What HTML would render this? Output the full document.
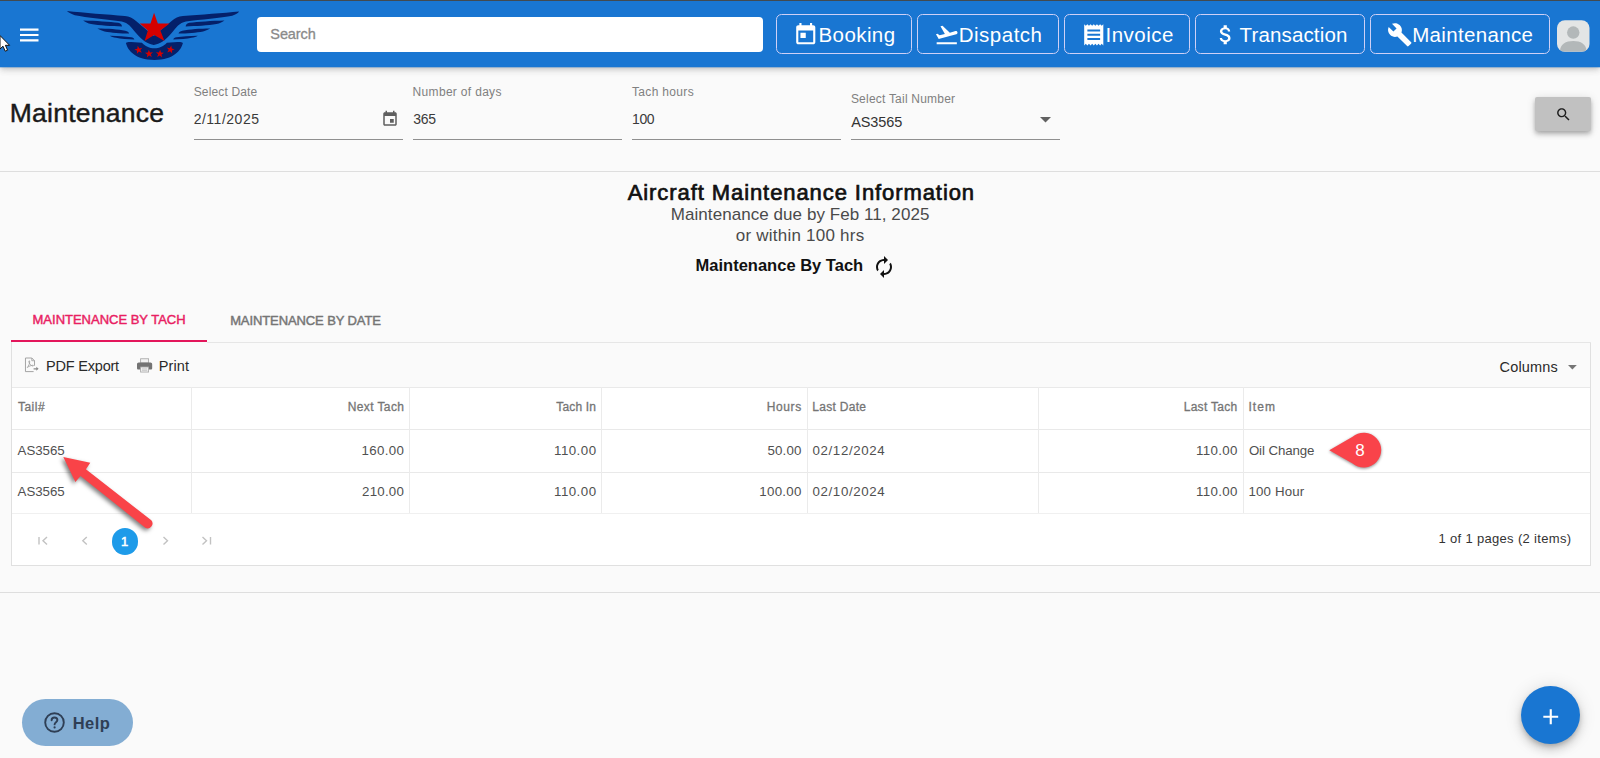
<!DOCTYPE html>
<html lang="en">
<head>
<meta charset="utf-8">
<title>Maintenance</title>
<style>
*{box-sizing:border-box;margin:0;padding:0}
html,body{width:1600px;height:758px;overflow:hidden;background:#fafafa;font-family:"Liberation Sans",sans-serif;color:#212121}
.abs,.t{position:absolute}
.t{white-space:nowrap;display:block}
#topline{left:0;top:0;width:1600px;height:1px;background:#424a50}
#hdr{left:0;top:0;width:1600px;height:67px;background:#1976d2;box-shadow:0 2px 4px -1px rgba(0,0,0,.13),0 4px 6px 0 rgba(0,0,0,.09),0 1px 10px 0 rgba(0,0,0,.08)}
#search{left:257px;top:17px;width:506px;height:34.5px;background:#fff;border-radius:4px}
.nb{top:14px;height:40px;border:1px solid #cfd0f6;border-radius:5.500px}
.uline{height:1px;background:#8f8f8f;top:139px}
.hr{left:0;width:1600px;height:1px;background:#dedede}
.vl{top:387px;width:1px;height:126px;background:#ebebeb}
.hl{left:12px;width:1578px;height:1px;background:#e9e9e9}
svg{position:absolute;overflow:visible}
</style>
</head>
<body>
<div class="abs" id="hdr"></div>
<div class="abs" id="topline"></div>
<div class="abs" style="left:0;top:67px;width:1600px;height:1px;background:rgba(25,118,210,.3)"></div>

<!-- hamburger -->
<svg style="left:17px;top:23px" width="24" height="24" viewBox="0 0 24 24"><path fill="#fff" d="M3 18.4h18.5v-2.2H3v2.2zm0-5.3h18.5v-2.2H3v2.2zM3 5.6v2.2h18.5V5.6H3z"/></svg>
<!-- mouse cursor -->
<svg style="left:0;top:35px" width="12" height="18" viewBox="0 0 12 18"><path d="M0 0.5 L0 14 L3 11.2 L5.2 16.2 L7.6 15.2 L5.4 10.3 L9.6 10.3 Z" fill="#fff" stroke="#111" stroke-width="1"/></svg>

<!-- logo -->
<svg id="logo" style="left:60px;top:5px" width="190" height="60" viewBox="0 0 1600 505">
<g id="wingL" fill="#04206a">
<path d="M58 51 C200 66 400 82 545 92 C585 96 610 108 640 135 L793 262 L793 336 C740 330 690 295 640 235 C600 185 575 150 520 138 C400 120 220 106 125 86 C95 78 75 65 58 51Z"/>
<path d="M195 130 C300 133 420 140 490 150 C510 154 520 165 522 180 C440 178 330 172 262 160 C235 154 210 142 195 130Z"/>
<path d="M315 198 C400 198 490 206 550 216 C568 220 578 228 582 240 C510 240 430 232 375 222 C350 216 330 208 315 198Z"/>
<path d="M420 258 C490 258 550 264 600 272 C615 275 622 280 626 290 C570 290 510 284 472 276 C450 272 432 266 420 258Z"/>
</g>
<g fill="#04206a" transform="translate(1580,0) scale(-1,1)">
<path d="M72 55 C200 68 400 82 545 92 C585 96 610 108 640 135 L793 262 L793 336 C740 330 690 295 640 235 C600 185 575 150 520 138 C400 122 220 110 130 90 C100 82 80 68 72 55Z"/>
<path d="M195 130 C300 133 420 140 490 150 C510 154 520 165 522 180 C440 178 330 172 262 160 C235 154 210 142 195 130Z"/>
<path d="M315 198 C400 198 490 206 550 216 C568 220 578 228 582 240 C510 240 430 232 375 222 C350 216 330 208 315 198Z"/>
<path d="M420 258 C490 258 550 264 600 272 C615 275 622 280 626 290 C570 290 510 284 472 276 C450 272 432 266 420 258Z"/>
</g>
<path fill="#04206a" d="M555 320 C565 312 580 311 600 312 L690 317 C715 345 755 364 795 364 C835 364 875 345 900 317 L990 312 C1010 311 1025 312 1035 320 C1020 380 960 462 795 462 C630 462 570 380 555 320Z"/>
<path fill="#d40000" d="M792 66 L824 155 L922 155 L845 214 L880 302 L793 252 L712 302 L740 214 L672 155 L762 155Z"/>
<g fill="#d40000">
<path d="M0 -35 L9 -11 L34 -11 L14 4 L21 29 L0 14 L-21 29 L-14 4 L-34 -11 L-9 -11Z" transform="translate(662,378) rotate(-12)"/>
<path d="M0 -35 L9 -11 L34 -11 L14 4 L21 29 L0 14 L-21 29 L-14 4 L-34 -11 L-9 -11Z" transform="translate(750,411) rotate(-4)"/>
<path d="M0 -35 L9 -11 L34 -11 L14 4 L21 29 L0 14 L-21 29 L-14 4 L-34 -11 L-9 -11Z" transform="translate(841,411) rotate(4)"/>
<path d="M0 -35 L9 -11 L34 -11 L14 4 L21 29 L0 14 L-21 29 L-14 4 L-34 -11 L-9 -11Z" transform="translate(930,376) rotate(12)"/>
</g>
</svg>

<div class="abs" id="search"></div>

<div class="abs nb" style="left:776px;width:136px"></div>
<div class="abs nb" style="left:917px;width:142px"></div>
<div class="abs nb" style="left:1064px;width:126px"></div>
<div class="abs nb" style="left:1195px;width:170px"></div>
<div class="abs nb" style="left:1370px;width:180px"></div>

<!-- nav icons -->
<svg style="left:793px;top:21.5px" width="25.5" height="25.5" viewBox="0 0 24 24"><path fill="#fff" d="M19 3h-1V1h-2v2H8V1H6v2H5c-1.11 0-1.99.9-1.99 2L3 19c0 1.1.89 2 2 2h14c1.100 0 2-.9 2-2V5c0-1.1-.9-2-2-2zm0 16H5V8h14v11zM7 10h5v5H7z"/></svg>
<svg style="left:934.3px;top:21.5px" width="25.5" height="25.5" viewBox="0 0 24 24"><path fill="#fff" d="M2.5 19h19v2h-19zm19.570-9.360c-.21-.8-1.040-1.280-1.840-1.060L14.920 10l-6.900-6.430-1.930.51 4.140 7.170-4.970 1.330-1.970-1.540-1.450.39 1.820 3.160.77 1.330 1.600-.43 5.310-1.420 4.350-1.160L21 11.490c.81-.23 1.280-1.050 1.070-1.850z"/></svg>
<svg style="left:1081.2px;top:22px" width="25.5" height="25.5" viewBox="0 0 24 24"><path fill="#fff" d="M18 17H6v-2h12v2zm0-4H6v-2h12v2zm0-4H6V7h12v2zM3 22l1.500-1.500L6 22l1.500-1.500L9 22l1.500-1.500L12 22l1.500-1.500L15 22l1.500-1.500L18 22l1.500-1.500L21 22V2l-1.500 1.500L18 2l-1.500 1.500L15 2l-1.500 1.500L12 2l-1.500 1.500L9 2 7.500 3.500 6 2 4.500 3.500 3 2v20z"/></svg>
<svg style="left:1212.5px;top:21.5px" width="25.5" height="25.5" viewBox="0 0 24 24"><path fill="#fff" d="M11.800 10.900c-2.270-.59-3-1.200-3-2.150 0-1.090 1.010-1.850 2.700-1.850 1.780 0 2.440.85 2.500 2.100h2.210c-.07-1.720-1.120-3.300-3.210-3.810V3h-3v2.160c-1.940.42-3.500 1.680-3.500 3.610 0 2.310 1.910 3.460 4.700 4.130 2.500.600 3 1.480 3 2.410 0 .69-.49 1.790-2.700 1.790-2.060 0-2.870-.92-2.980-2.100h-2.200c.12 2.190 1.760 3.420 3.680 3.830V21h3v-2.150c1.950-.37 3.500-1.500 3.500-3.550 0-2.840-2.430-3.810-4.700-4.400z"/></svg>
<svg style="left:1386.8px;top:21.5px" width="25.500" height="25.500" viewBox="0 0 24 24"><path fill="#fff" d="M22.700 19l-9.100-9.100c.9-2.300.4-5-1.500-6.900-2-2-5-2.400-7.400-1.300L9 6 6 9 1.600 4.700C.4 7.100.9 10.100 2.900 12.100c1.900 1.900 4.600 2.400 6.900 1.500l9.100 9.100c.4.4 1 .4 1.400 0l2.300-2.300c.5-.4.5-1.100.1-1.400z"/></svg>

<!-- avatar -->
<svg style="left:1557.200px;top:20px" width="32.500" height="32" viewBox="0 0 33 32"><defs><clipPath id="avc"><rect x="0" y="0" width="33" height="32" rx="8"/></clipPath></defs><rect width="33" height="32" rx="8" fill="#e3e5e5"/><g clip-path="url(#avc)" fill="#b3b8b9"><circle cx="16.500" cy="12.500" r="6.300"/><path d="M3 32 C3 24 9 21 16.500 21 C24 21 30 24 30 32Z"/></g></svg>

<!-- filter underlines -->
<div class="abs uline" style="left:194px;width:208.5px"></div>
<div class="abs uline" style="left:413px;width:208.5px"></div>
<div class="abs uline" style="left:632px;width:208.5px"></div>
<div class="abs uline" style="left:851px;width:208.5px"></div>
<!-- calendar icon -->
<svg style="left:380.600px;top:110.200px" width="18" height="18" viewBox="0 0 24 24"><path fill="#5f5f5f" d="M17 12h-5v5h5v-5zM16 1v2H8V1H6v2H5c-1.110 0-1.990.9-1.990 2L3 19c0 1.100.89 2 2 2h14c1.100 0 2-.9 2-2V5c0-1.100-.9-2-2-2h-1V1h-2zm3 18H5V8h14v11z"/></svg>
<!-- dropdown triangle -->
<svg style="left:1040.400px;top:116.700px" width="11" height="5.500" viewBox="0 0 11 5.500"><path fill="#616161" d="M0 0h11L5.500 5.500z"/></svg>
<!-- search button -->
<div class="abs" style="left:1535px;top:97px;width:56px;height:34px;background:#c1c1c1;border-radius:2px;box-shadow:0 2px 4px -1px rgba(0,0,0,.2),0 4px 5px 0 rgba(0,0,0,.14),0 1px 10px 0 rgba(0,0,0,.12)"></div>
<svg style="left:1554.800px;top:105.900px" width="17" height="17" viewBox="0 0 24 24"><path fill="#1d1d1d" d="M15.500 14h-.79l-.28-.27C15.410 12.590 16 11.110 16 9.500 16 5.910 13.090 3 9.500 3S3 5.910 3 9.500 5.910 16 9.500 16c1.610 0 3.090-.59 4.230-1.570l.27.28v.79l5 4.990L20.490 19l-4.990-5zm-6 0C7.010 14 5 11.990 5 9.500S7.010 5 9.500 5 14 7.010 14 9.500 11.990 14 9.500 14z"/></svg>

<div class="abs hr" style="top:171px"></div>
<div class="abs hr" style="top:592px"></div>

<!-- refresh icon -->
<svg style="left:871.500px;top:254.600px" width="24" height="24" viewBox="0 0 24 24"><path fill="#111" d="M12 6v3l4-4-4-4v3c-4.420 0-8 3.580-8 8 0 1.570.46 3.030 1.240 4.260L6.700 14.800c-.45-.83-.7-1.790-.7-2.800 0-3.310 2.690-6 6-6zm6.760 1.740L17.300 9.200c.44.840.7 1.790.7 2.800 0 3.310-2.690 6-6 6v-3l-4 4 4 4v-3c4.420 0 8-3.580 8-8 0-1.570-.46-3.030-1.240-4.260z"/></svg>

<!-- tabs -->

<div class="abs" style="left:11px;top:340px;width:196px;height:2px;background:#e3165b"></div>

<!-- grid -->
<div class="abs" style="left:11px;top:342px;width:1580px;height:224px;border:1px solid #e0e0e0;border-top:none;background:#fff"></div>
<div class="abs" style="left:12px;top:342px;width:1578px;height:45px;background:#fafafa"></div>
<div class="abs" style="left:207px;top:342px;width:1384px;height:1px;background:#e6e6e6"></div>
<div class="abs hl" style="top:387px"></div>
<div class="abs hl" style="top:429px"></div>
<div class="abs hl" style="top:472px"></div>
<div class="abs hl" style="top:513px;background:#f0f0f0"></div>
<div class="abs vl" style="left:191px"></div>
<div class="abs vl" style="left:409px"></div>
<div class="abs vl" style="left:601px"></div>
<div class="abs vl" style="left:807px"></div>
<div class="abs vl" style="left:1038px"></div>
<div class="abs vl" style="left:1243px"></div>

<!-- toolbar icons -->
<svg style="left:25.200px;top:357.200px" width="13.600" height="15.600" viewBox="0 0 15 16"><path fill="none" stroke="#9c9c9c" stroke-width="1" d="M9.500 15.500H.5V.5h7l3 3v5.500"/><path fill="none" stroke="#9c9c9c" stroke-width=".9" d="M7.500 .5v3h3M2.500 11c1.500-1.500 3-5 2.600-7-.3-.9-1.100-.4-.8.800.5 2 2.400 4.400 4.400 4.600 1 0 .9-1-.3-.9-1.800.2-4.300 1.200-5.900 2.500z"/><path fill="#8a8a8a" d="M9.500 11.700h3v-1.600l2.500 2.300-2.500 2.300v-1.600h-3z"/></svg>
<svg style="left:136.800px;top:357.500px" width="15.200" height="14.800" viewBox="0 0 16 15"><rect x="3.800" y=".5" width="8.400" height="4.500" fill="#f2f2f2" stroke="#a8a8a8" stroke-width=".9"/><path fill="#737373" d="M1.800 4.400h12.400c1 0 1.800.8 1.800 1.800v4.200c0 .8-.6 1.400-1.400 1.400H1.400C.6 11.800 0 11.200 0 10.400V6.200c0-1 .8-1.800 1.800-1.800z"/><rect x="3.800" y="9.200" width="8.400" height="5.300" fill="#f4f4f4" stroke="#a8a8a8" stroke-width=".9"/><path stroke="#b0b0b0" stroke-width=".7" d="M5.200 11.200h5.600M5.200 12.700h5.600"/></svg>
<svg style="left:1567.800px;top:364.800px" width="8.800" height="4.500" viewBox="0 0 8.800 4.500"><path fill="#757575" d="M0 0h8.800L4.400 4.500z"/></svg>

<!-- pager -->
<div class="abs" style="left:111.500px;top:527.800px;width:26.800px;height:26.800px;border-radius:50%;background:#1e9be9"></div>
<svg style="left:38px;top:535px" width="176" height="12" viewBox="0 0 176 12" fill="none" stroke="#c2c2c2" stroke-width="1.400"><path d="M1 2v7.500M9 2L5 5.800 9 9.500"/><path d="M48.800 2L44.800 5.800 48.800 9.500"/><path d="M125.500 2l4 3.800-4 3.700"/><path d="M164.500 2l4 3.800-4 3.700M172.500 2v7.500"/></svg>

<!-- callout 8 -->
<svg style="left:1320px;top:425px" width="70" height="52" viewBox="1320 425 70 52"><path fill="#f9434a" filter="drop-shadow(0 1.500px 1.800px rgba(0,0,0,.45))" d="M1329.300 450.200 L1352.600 436.800 A17.400 17.400 0 1 1 1352.600 463.400 Z"/></svg>

<!-- red arrow -->
<svg style="left:50px;top:445px" width="120" height="100" viewBox="50 445 120 100"><path fill="#f94348" filter="drop-shadow(-1.200px 2px 2px rgba(0,0,0,.5))" d="M63.300 457 L90.300 462.700 L85.900 469.300 L151.300 520.300 A4.850 4.850 0 0 1 145.300 527.700 L80.500 475.900 L75.400 482 Z"/></svg>

<!-- help -->
<div class="abs" style="left:21.800px;top:699px;width:111.400px;height:47px;border-radius:23.500px;background:#83add3"></div>
<svg style="left:44px;top:712px" width="21" height="21" viewBox="0 0 21 21"><circle cx="10.500" cy="10.500" r="9.300" fill="none" stroke="#2f3f55" stroke-width="1.900"/><path fill="none" stroke="#2f3f55" stroke-width="1.900" stroke-linecap="round" d="M7.600 8.300c0-1.700 1.300-2.800 2.900-2.800s2.900 1 2.900 2.600c0 2-2.800 2.200-2.800 4.300"/><circle cx="10.600" cy="15.400" r="1.100" fill="#2f3f55"/></svg>

<!-- fab -->
<div class="abs" style="left:1521.200px;top:686.300px;width:58.900px;height:58.100px;border-radius:50%;background:#1976d2;box-shadow:0 3px 5px -1px rgba(0,0,0,.2),0 6px 10px 0 rgba(0,0,0,.14),0 1px 18px 0 rgba(0,0,0,.12)"></div>
<svg style="left:1538px;top:703.700px" width="25.500" height="25.500" viewBox="0 0 24 24"><path fill="#fff" d="M19 13h-6v6h-2v-6H5v-2h6V5h2v6h6v2z"/></svg>

<span class="t" id="t0" style="left:270.30px;top:27.48px;font-size:14.5px;line-height:14.5px;font-weight:400;color:#8a8a8a;letter-spacing:-0.090px;-webkit-text-stroke:.3px #8a8a8a">Search</span>
<span class="t" id="t1" style="left:818.50px;top:24.65px;font-size:20.5px;line-height:20.5px;font-weight:400;color:#fff;letter-spacing:0.417px;">Booking</span>
<span class="t" id="t2" style="left:958.75px;top:24.65px;font-size:20.5px;line-height:20.5px;font-weight:400;color:#fff;letter-spacing:0.493px;">Dispatch</span>
<span class="t" id="t3" style="left:1105.50px;top:24.65px;font-size:20.5px;line-height:20.5px;font-weight:400;color:#fff;letter-spacing:0.500px;">Invoice</span>
<span class="t" id="t4" style="left:1239.50px;top:24.65px;font-size:20.5px;line-height:20.5px;font-weight:400;color:#fff;letter-spacing:0.150px;">Transaction</span>
<span class="t" id="t5" style="left:1412.20px;top:24.65px;font-size:20.5px;line-height:20.5px;font-weight:400;color:#fff;letter-spacing:0.330px;">Maintenance</span>
<span class="t" id="t6" style="left:9.80px;top:100.17px;font-size:26.5px;line-height:26.5px;font-weight:400;color:#1a1a1a;letter-spacing:0.235px;-webkit-text-stroke:.45px #1a1a1a">Maintenance</span>
<span class="t" id="t7" style="left:193.70px;top:86.24px;font-size:12px;line-height:12px;font-weight:400;color:#808080;letter-spacing:0.150px;">Select Date</span>
<span class="t" id="t8" style="left:193.65px;top:111.55px;font-size:14px;line-height:14px;font-weight:400;color:#3a3a3a;letter-spacing:0.512px;">2/11/2025</span>
<span class="t" id="t9" style="left:412.60px;top:86.24px;font-size:12px;line-height:12px;font-weight:400;color:#808080;letter-spacing:0.319px;">Number of days</span>
<span class="t" id="t10" style="left:413.30px;top:111.55px;font-size:14px;line-height:14px;font-weight:400;color:#3a3a3a;letter-spacing:-0.325px;">365</span>
<span class="t" id="t11" style="left:632.05px;top:86.24px;font-size:12px;line-height:12px;font-weight:400;color:#808080;letter-spacing:0.322px;">Tach hours</span>
<span class="t" id="t12" style="left:632.00px;top:111.55px;font-size:14px;line-height:14px;font-weight:400;color:#3a3a3a;letter-spacing:-0.375px;">100</span>
<span class="t" id="t13" style="left:850.90px;top:92.84px;font-size:12px;line-height:12px;font-weight:400;color:#808080;letter-spacing:0.218px;">Select Tail Number</span>
<span class="t" id="t14" style="left:851.20px;top:114.73px;font-size:14.5px;line-height:14.5px;font-weight:400;color:#333;letter-spacing:-0.080px;">AS3565</span>
<span class="t" id="t15" style="left:627.70px;top:182.08px;font-size:22px;line-height:22px;font-weight:400;color:#111;letter-spacing:0.919px;-webkit-text-stroke:.7px #111">Aircraft Maintenance Information</span>
<span class="t" id="t16" style="left:670.75px;top:205.51px;font-size:17px;line-height:17px;font-weight:400;color:#4a4a4a;letter-spacing:0.062px;">Maintenance due by Feb 11, 2025</span>
<span class="t" id="t17" style="left:735.85px;top:226.51px;font-size:17px;line-height:17px;font-weight:400;color:#4a4a4a;letter-spacing:0.225px;">or within 100 hrs</span>
<span class="t" id="t18" style="left:695.50px;top:257.28px;font-size:16.5px;line-height:16.5px;font-weight:700;color:#111;letter-spacing:0.011px;">Maintenance By Tach</span>
<span class="t" id="t19" style="left:32.55px;top:312.70px;font-size:13px;line-height:13px;font-weight:400;color:#e91e63;letter-spacing:-0.006px;-webkit-text-stroke:.45px #e91e63">MAINTENANCE BY TACH</span>
<span class="t" id="t20" style="left:230.15px;top:314.20px;font-size:13px;line-height:13px;font-weight:400;color:#757575;letter-spacing:-0.103px;-webkit-text-stroke:.45px #757575">MAINTENANCE BY DATE</span>
<span class="t" id="t21" style="left:46.10px;top:358.83px;font-size:14.5px;line-height:14.5px;font-weight:400;color:#2a2a2a;letter-spacing:-0.211px;">PDF Export</span>
<span class="t" id="t22" style="left:158.70px;top:358.83px;font-size:14.5px;line-height:14.5px;font-weight:400;color:#2a2a2a;letter-spacing:0.138px;">Print</span>
<span class="t" id="t23" style="left:1499.55px;top:360.33px;font-size:14.5px;line-height:14.5px;font-weight:400;color:#2a2a2a;letter-spacing:0.183px;">Columns</span>
<span class="t" id="t24" style="left:17.90px;top:401.09px;font-size:12px;line-height:12px;font-weight:400;color:#757575;letter-spacing:0.500px;-webkit-text-stroke:.3px #757575">Tail#</span>
<span class="t" id="t25" style="left:347.65px;top:401.09px;font-size:12px;line-height:12px;font-weight:400;color:#757575;letter-spacing:0.406px;-webkit-text-stroke:.3px #757575">Next Tach</span>
<span class="t" id="t26" style="left:556.25px;top:401.09px;font-size:12px;line-height:12px;font-weight:400;color:#757575;letter-spacing:0.183px;-webkit-text-stroke:.3px #757575">Tach In</span>
<span class="t" id="t27" style="left:766.75px;top:401.09px;font-size:12px;line-height:12px;font-weight:400;color:#757575;letter-spacing:0.600px;-webkit-text-stroke:.3px #757575">Hours</span>
<span class="t" id="t28" style="left:812.35px;top:401.09px;font-size:12px;line-height:12px;font-weight:400;color:#757575;letter-spacing:0.281px;-webkit-text-stroke:.3px #757575">Last Date</span>
<span class="t" id="t29" style="left:1183.65px;top:401.09px;font-size:12px;line-height:12px;font-weight:400;color:#757575;letter-spacing:0.312px;-webkit-text-stroke:.3px #757575">Last Tach</span>
<span class="t" id="t30" style="left:1248.40px;top:401.09px;font-size:12px;line-height:12px;font-weight:400;color:#757575;letter-spacing:1.117px;-webkit-text-stroke:.3px #757575">Item</span>
<span class="t" id="t31" style="left:17.60px;top:443.74px;font-size:13.3px;line-height:13.3px;font-weight:400;color:#505050;letter-spacing:-0.050px;">AS3565</span>
<span class="t" id="t32" style="left:361.50px;top:443.74px;font-size:13.3px;line-height:13.3px;font-weight:400;color:#505050;letter-spacing:0.330px;">160.00</span>
<span class="t" id="t33" style="left:554.00px;top:443.74px;font-size:13.3px;line-height:13.3px;font-weight:400;color:#505050;letter-spacing:0.470px;">110.00</span>
<span class="t" id="t34" style="left:767.50px;top:443.74px;font-size:13.3px;line-height:13.3px;font-weight:400;color:#505050;letter-spacing:0.162px;">50.00</span>
<span class="t" id="t35" style="left:812.50px;top:443.74px;font-size:13.3px;line-height:13.3px;font-weight:400;color:#505050;letter-spacing:0.628px;">02/12/2024</span>
<span class="t" id="t36" style="left:1195.90px;top:443.74px;font-size:13.3px;line-height:13.3px;font-weight:400;color:#505050;letter-spacing:0.350px;">110.00</span>
<span class="t" id="t37" style="left:1248.90px;top:443.74px;font-size:13.3px;line-height:13.3px;font-weight:400;color:#505050;letter-spacing:-0.111px;">Oil Change</span>
<span class="t" id="t38" style="left:17.60px;top:485.34px;font-size:13.3px;line-height:13.3px;font-weight:400;color:#505050;letter-spacing:-0.050px;">AS3565</span>
<span class="t" id="t39" style="left:362.00px;top:485.34px;font-size:13.3px;line-height:13.3px;font-weight:400;color:#505050;letter-spacing:0.230px;">210.00</span>
<span class="t" id="t40" style="left:554.00px;top:485.34px;font-size:13.3px;line-height:13.3px;font-weight:400;color:#505050;letter-spacing:0.470px;">110.00</span>
<span class="t" id="t41" style="left:759.30px;top:485.34px;font-size:13.3px;line-height:13.3px;font-weight:400;color:#505050;letter-spacing:0.270px;">100.00</span>
<span class="t" id="t42" style="left:812.50px;top:485.34px;font-size:13.3px;line-height:13.3px;font-weight:400;color:#505050;letter-spacing:0.628px;">02/10/2024</span>
<span class="t" id="t43" style="left:1195.90px;top:485.34px;font-size:13.3px;line-height:13.3px;font-weight:400;color:#505050;letter-spacing:0.350px;">110.00</span>
<span class="t" id="t44" style="left:1248.40px;top:485.34px;font-size:13.3px;line-height:13.3px;font-weight:400;color:#505050;letter-spacing:0.157px;">100 Hour</span>
<span class="t" id="t45" style="left:121.12px;top:534.70px;font-size:13px;line-height:13px;font-weight:400;color:#fff;letter-spacing:0.000px;-webkit-text-stroke:.5px #fff">1</span>
<span class="t" id="t46" style="left:1438.50px;top:531.50px;font-size:13px;line-height:13px;font-weight:400;color:#333;letter-spacing:0.324px;">1 of 1 pages (2 items)</span>
<span class="t" id="t47" style="left:72.75px;top:714.78px;font-size:16.5px;line-height:16.5px;font-weight:700;color:#2f3f55;letter-spacing:0.417px;">Help</span>
<span class="t" id="t48" style="left:1355.25px;top:441.81px;font-size:17px;line-height:17px;font-weight:400;color:#fff;letter-spacing:0.000px;">8</span>
</body>
</html>
